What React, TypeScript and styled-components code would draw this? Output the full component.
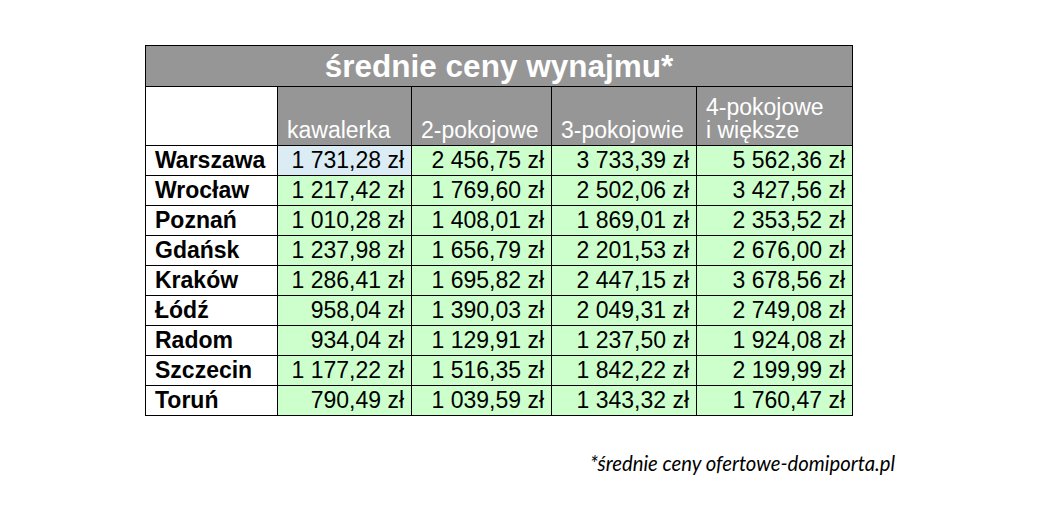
import React from "react";
import styled, { createGlobalStyle } from "styled-components";

const GlobalStyle = createGlobalStyle`
  html, body { margin: 0; padding: 0; background: #ffffff; }
  body { font-family: "Liberation Sans", Arial, sans-serif; }
`;

const Page = styled.div`
  width: 1038px;
  height: 514px;
  box-sizing: border-box;
  padding: 45px 0 0 145px;
  display: flex;
  flex-direction: column;
  background: #ffffff;
`;

const Table = styled.div`
  display: grid;
  grid-template-columns: 131px 133px 139px 144px 155px;
  grid-template-rows: 40px 58px repeat(9, 29px);
  gap: 1px;
  padding: 1px;
  background: #000000;
  width: max-content;
  font-family: "Liberation Sans", Arial, sans-serif;
`;

const Title = styled.div`
  grid-column: 1 / -1;
  background: #969696;
  color: #ffffff;
  font-weight: bold;
  font-size: 31.5px;
  line-height: 40px;
  text-align: center;
`;

const HeadCell = styled.div<{ $blank?: boolean }>`
  background: ${(p) => (p.$blank ? "#ffffff" : "#969696")};
  color: #ffffff;
  font-size: 23px;
  line-height: 23px;
  display: flex;
  align-items: flex-end;
  padding: 0 0 3px 9px;
  white-space: pre-line;
`;

const CityCell = styled.div`
  background: #ffffff;
  color: #000000;
  font-weight: bold;
  font-size: 23px;
  line-height: 29px;
  padding-left: 9px;
  white-space: nowrap;
`;

const ValueCell = styled.div<{ $highlight?: boolean }>`
  background: ${(p) => (p.$highlight ? "#dcecf4" : "#ccffcc")};
  color: #000000;
  font-size: 23px;
  line-height: 29px;
  text-align: right;
  padding-right: 7px;
  white-space: nowrap;
`;

const Footnote = styled.div`
  margin: 35px 0 0 445px;
  font-family: Lato, "Open Sans", sans-serif;
  font-style: italic;
  font-size: 20.3px;
  color: #000000;
  white-space: nowrap;
`;

const headers = ["kawalerka", "2-pokojowe", "3-pokojowie", "4-pokojowe\ni większe"];

const rows: [string, string[]][] = [
  ["Warszawa", ["1 731,28 zł", "2 456,75 zł", "3 733,39 zł", "5 562,36 zł"]],
  ["Wrocław", ["1 217,42 zł", "1 769,60 zł", "2 502,06 zł", "3 427,56 zł"]],
  ["Poznań", ["1 010,28 zł", "1 408,01 zł", "1 869,01 zł", "2 353,52 zł"]],
  ["Gdańsk", ["1 237,98 zł", "1 656,79 zł", "2 201,53 zł", "2 676,00 zł"]],
  ["Kraków", ["1 286,41 zł", "1 695,82 zł", "2 447,15 zł", "3 678,56 zł"]],
  ["Łódź", ["958,04 zł", "1 390,03 zł", "2 049,31 zł", "2 749,08 zł"]],
  ["Radom", ["934,04 zł", "1 129,91 zł", "1 237,50 zł", "1 924,08 zł"]],
  ["Szczecin", ["1 177,22 zł", "1 516,35 zł", "1 842,22 zł", "2 199,99 zł"]],
  ["Toruń", ["790,49 zł", "1 039,59 zł", "1 343,32 zł", "1 760,47 zł"]],
];

export default function App() {
  return (
    <>
      <GlobalStyle />
      <Page>
        <Table>
          <Title>średnie ceny wynajmu*</Title>
          <HeadCell $blank />
          {headers.map((h) => (
            <HeadCell key={h}>{h}</HeadCell>
          ))}
          {rows.map(([city, values], ri) => (
            <React.Fragment key={city}>
              <CityCell>{city}</CityCell>
              {values.map((v, ci) => (
                <ValueCell key={ci} $highlight={ri === 0 && ci === 0}>
                  {v}
                </ValueCell>
              ))}
            </React.Fragment>
          ))}
        </Table>
        <Footnote>*średnie ceny ofertowe-domiporta.pl</Footnote>
      </Page>
    </>
  );
}
